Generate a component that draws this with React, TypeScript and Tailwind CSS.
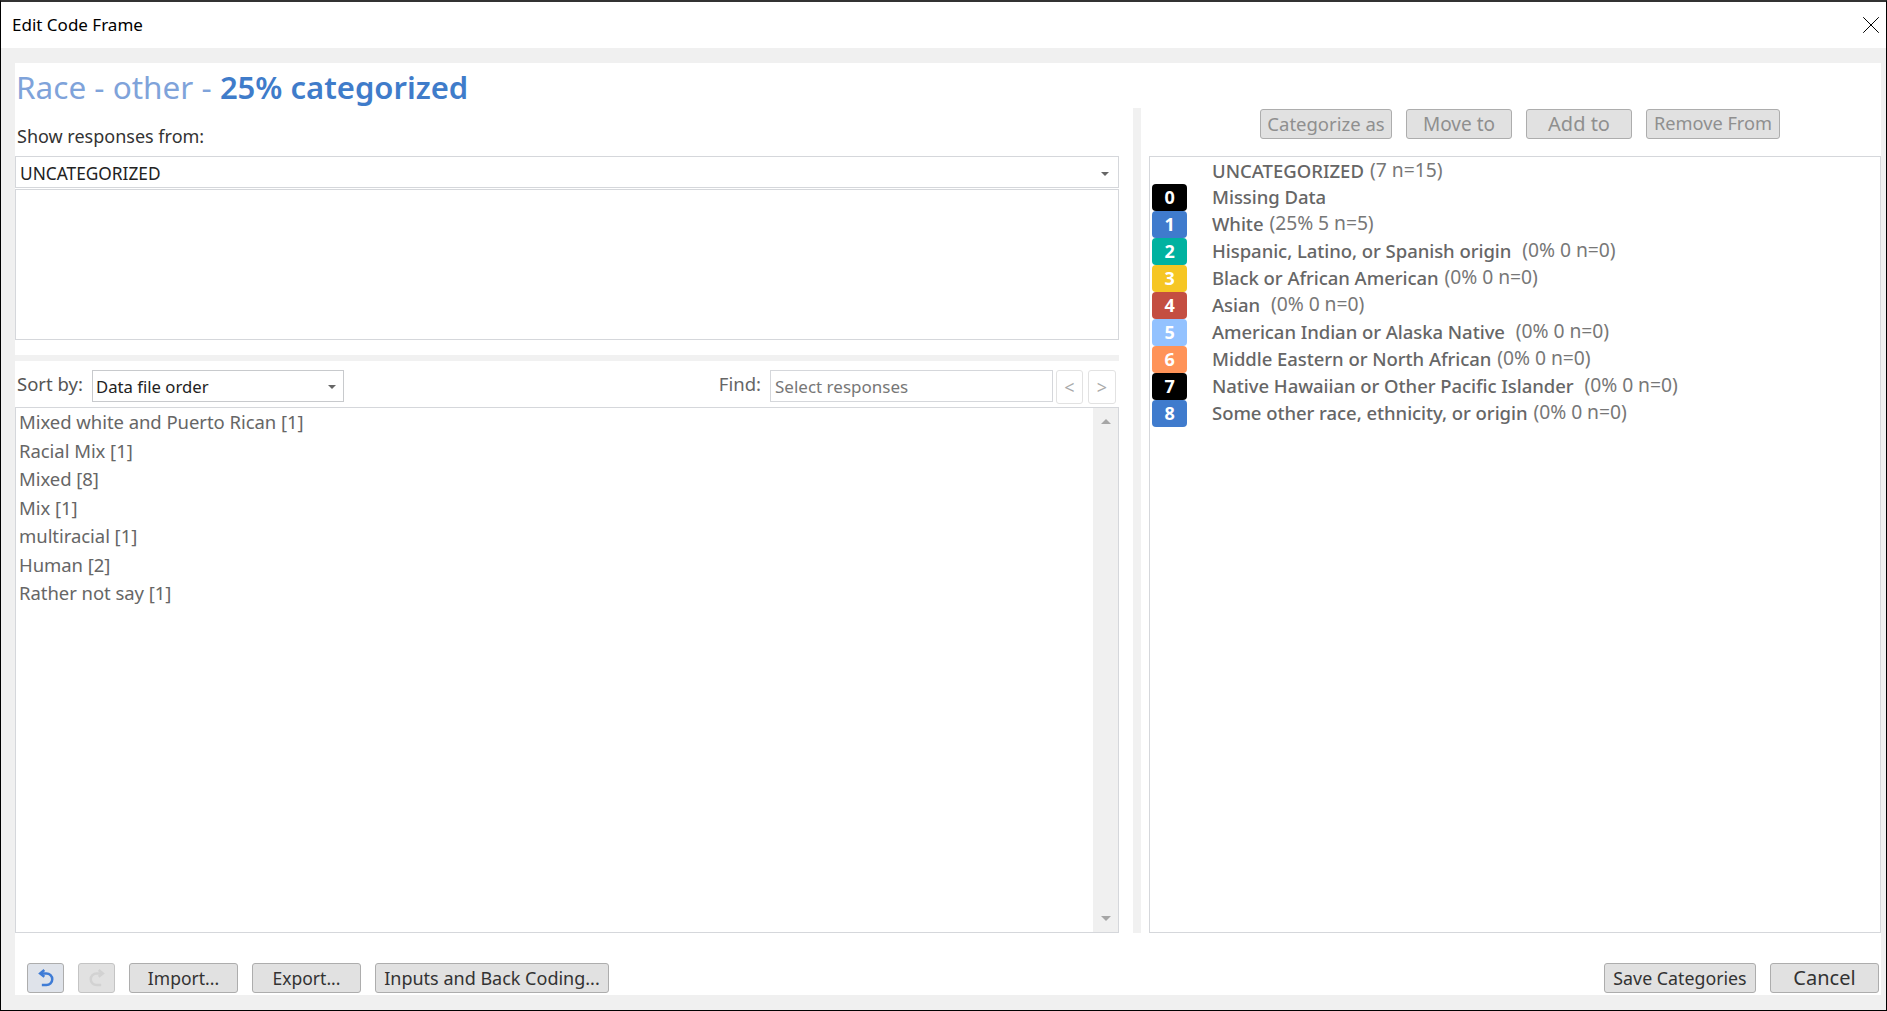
import { X } from "lucide-react";

const responses = [
  "Mixed white and Puerto Rican [1]",
  "Racial Mix [1]",
  "Mixed [8]",
  "Mix [1]",
  "multiracial [1]",
  "Human [2]",
  "Rather not say [1]",
];

const categories = [
  { id: "0", color: "bg-[#000000]", name: "Missing Data", stats: "" },
  { id: "1", color: "bg-[#3f7bcd]", name: "White", stats: "(25% 5 n=5)" },
  { id: "2", color: "bg-[#00b2a0]", name: "Hispanic, Latino, or Spanish origin", stats: " (0% 0 n=0)" },
  { id: "3", color: "bg-[#f6c624]", name: "Black or African American", stats: "(0% 0 n=0)" },
  { id: "4", color: "bg-[#c44e41]", name: "Asian", stats: " (0% 0 n=0)" },
  { id: "5", color: "bg-[#93c2ff]", name: "American Indian or Alaska Native", stats: " (0% 0 n=0)" },
  { id: "6", color: "bg-[#ff9358]", name: "Middle Eastern or North African", stats: "(0% 0 n=0)" },
  { id: "7", color: "bg-[#000000]", name: "Native Hawaiian or Other Pacific Islander", stats: " (0% 0 n=0)" },
  { id: "8", color: "bg-[#3f7bcd]", name: "Some other race, ethnicity, or origin", stats: "(0% 0 n=0)" },
];

function Caret() {
  return <span className="h-0 w-0 border-x-[4px] border-t-[4px] border-x-transparent border-t-[#666]" />;
}

function UndoIcon({ className }: { className: string }) {
  return (
    <svg viewBox="0 0 24 24" width={20} height={20} fill="none" stroke="currentColor" strokeWidth={3} className={className}>
      <path d="M6 6.5H12.5A7 7 0 1 1 12.5 20.5H7" />
      <path d="M10 2.5L5 6.5L10 10.5" />
    </svg>
  );
}

function ActionButton({ label, width, size = "text-[18px]", disabled }: { label: string; width: string; size?: string; disabled?: boolean }) {
  return (
    <button
      className={`flex h-[30px] items-center justify-center whitespace-nowrap rounded-[3px] border border-[#adadad] bg-[#e1e1e1] ${size} ${width} ${disabled ? "text-[#8f8f8f]" : "text-[#333]"}`}
    >
      {label}
    </button>
  );
}

export default function App() {
  return (
    <div className="flex h-[1011px] w-[1887px] flex-col overflow-hidden border border-t-2 border-black border-t-[#333] bg-[#f0f0f0] font-['Noto_Sans',sans-serif]">
      <div className="flex h-[46px] shrink-0 items-center justify-between bg-white pl-[11px]">
        <span className="text-[17px] text-black">Edit Code Frame</span>
        <X size={30} strokeWidth={0.8} className="text-black" />
      </div>

      <div className="mb-[15px] ml-[14px] mr-[5px] mt-[15px] flex flex-1 flex-col bg-white">
        <div className="flex h-[870px] shrink-0">
          <div className="flex w-[1104px] shrink-0 flex-col">
            <h1 className="mt-[4px] h-[40px] pl-px text-[31.5px] leading-[40px] text-[#7fa3da]">
              Race - other - <span className="text-[31px] font-semibold text-[#3f7cca]">25% categorized</span>
            </h1>
            <div className="mt-[17px] h-[24px] pl-[2px] text-[18px] leading-[24px] text-[#333]">Show responses from:</div>
            <div className="mt-[8px] flex h-[32px] items-center justify-between border border-[#d5d7db] pl-[4px] pr-[9px] pt-[3px] text-[17.3px] text-[#222]">
              UNCATEGORIZED
              <Caret />
            </div>
            <div className="mt-px h-[151px] border border-[#d5d7db]" />
            <div className="mt-[15px] h-[6px] bg-[#f1f1f1]" />
            <div className="mt-[9px] flex h-[34px] items-start pl-[2px]">
              <span className="w-[75px] text-[18.5px] leading-[28px] text-[#555]">Sort by:</span>
              <div className="flex h-[32px] w-[252px] items-center justify-between border border-[#c8cacd] pl-[3px] pr-[7px] pt-[2px] text-[16.7px] text-[#222]">
                Data file order
                <Caret />
              </div>
              <span className="ml-auto mr-[9px] text-[18.5px] leading-[28px] text-[#666]">Find:</span>
              <div className="flex h-[32px] w-[283px] items-center border border-[#d5d7db] pl-[4px] pt-[2px] text-[17px] text-[#777]">
                Select responses
              </div>
              <div className="ml-[3px] flex h-[34px] w-[27px] items-center justify-center rounded-[3px] border border-[#e2e2e2] text-[18px] text-[#aaa]">&lt;</div>
              <div className="ml-[5px] mr-[3px] flex h-[34px] w-[28px] items-center justify-center rounded-[3px] border border-[#e2e2e2] text-[18px] text-[#aaa]">&gt;</div>
            </div>
            <div className="mt-[3px] flex min-h-0 flex-1 border border-[#d5d7db]">
              <div className="flex-1 pl-[3px]">
                {responses.map((item) => (
                  <div key={item} className="h-[28.5px] text-[18.5px] leading-[28px] tracking-[-0.05px] text-[#666]">
                    {item}
                  </div>
                ))}
              </div>
              <div className="flex w-[25px] flex-col items-center justify-between bg-[#f0f0f0] py-[11px]">
                <span className="h-0 w-0 border-x-[5px] border-b-[5px] border-x-transparent border-b-[#a6a6a6]" />
                <span className="h-0 w-0 border-x-[5px] border-t-[5px] border-x-transparent border-t-[#a6a6a6]" />
              </div>
            </div>
          </div>

          <div className="ml-[14px] mt-[45px] w-[8px] shrink-0 bg-[#f1f1f1]" />

          <div className="ml-[8px] flex w-[732px] shrink-0 flex-col">
            <div className="mt-[46px] flex h-[30px] gap-[14px] pl-[111px]">
              <ActionButton label="Categorize as" width="w-[132px]" size="text-[18.5px]" disabled />
              <ActionButton label="Move to" width="w-[106px]" size="text-[19px]" disabled />
              <ActionButton label="Add to" width="w-[106px]" size="text-[20px]" disabled />
              <ActionButton label="Remove From" width="w-[134px]" size="text-[18.2px]" disabled />
            </div>
            <div className="mt-[17px] flex-1 border border-[#d5d7db] pl-[2px] pt-px">
              <div className="flex h-[26px] items-center pb-px pl-[60px] text-[18.5px]">
                <span className="font-medium text-[#666]">UNCATEGORIZED</span>
                <span className="ml-[6px] text-[19.3px] text-[#777]">(7 n=15)</span>
              </div>
              {categories.map((cat) => (
                <div key={cat.id} className="flex h-[27px] items-center text-[18.5px] tracking-[-0.05px]">
                  <span className={`flex h-[27px] w-[35px] shrink-0 items-center justify-center rounded-[4px] text-[18px] font-bold text-white ${cat.color}`}>
                    {cat.id}
                  </span>
                  <span className="mb-[2px] ml-[25px] whitespace-pre font-medium text-[#666]">{cat.name}</span>
                  <span className="mb-[2px] ml-[6px] whitespace-pre text-[19.3px] text-[#777]">{cat.stats}</span>
                </div>
              ))}
            </div>
          </div>
        </div>

        <div className="mt-[30px] flex h-[30px] items-center pl-[12px] pr-[2px]">
          <button className="flex h-[30px] w-[37px] items-center justify-center rounded-[3px] border border-[#adadad] bg-[#dfe3ea]">
            <UndoIcon className="text-[#3f7cd6]" />
          </button>
          <button className="ml-[14px] flex h-[30px] w-[37px] items-center justify-center rounded-[3px] border border-[#c4c4c4] bg-[#e1e1e1]">
            <UndoIcon className="-scale-x-100 text-[#d2d2d2]" />
          </button>
          <div className="ml-[14px] flex gap-[14px]">
            <ActionButton label="Import..." width="w-[109px]" size="text-[17.5px]" />
            <ActionButton label="Export..." width="w-[109px]" size="text-[17.5px]" />
            <ActionButton label="Inputs and Back Coding..." width="w-[234px]" />
          </div>
          <div className="ml-auto flex gap-[14px]">
            <ActionButton label="Save Categories" width="w-[152px]" size="text-[17.8px]" />
            <ActionButton label="Cancel" width="w-[109px]" size="text-[20px]" />
          </div>
        </div>
      </div>
    </div>
  );
}
